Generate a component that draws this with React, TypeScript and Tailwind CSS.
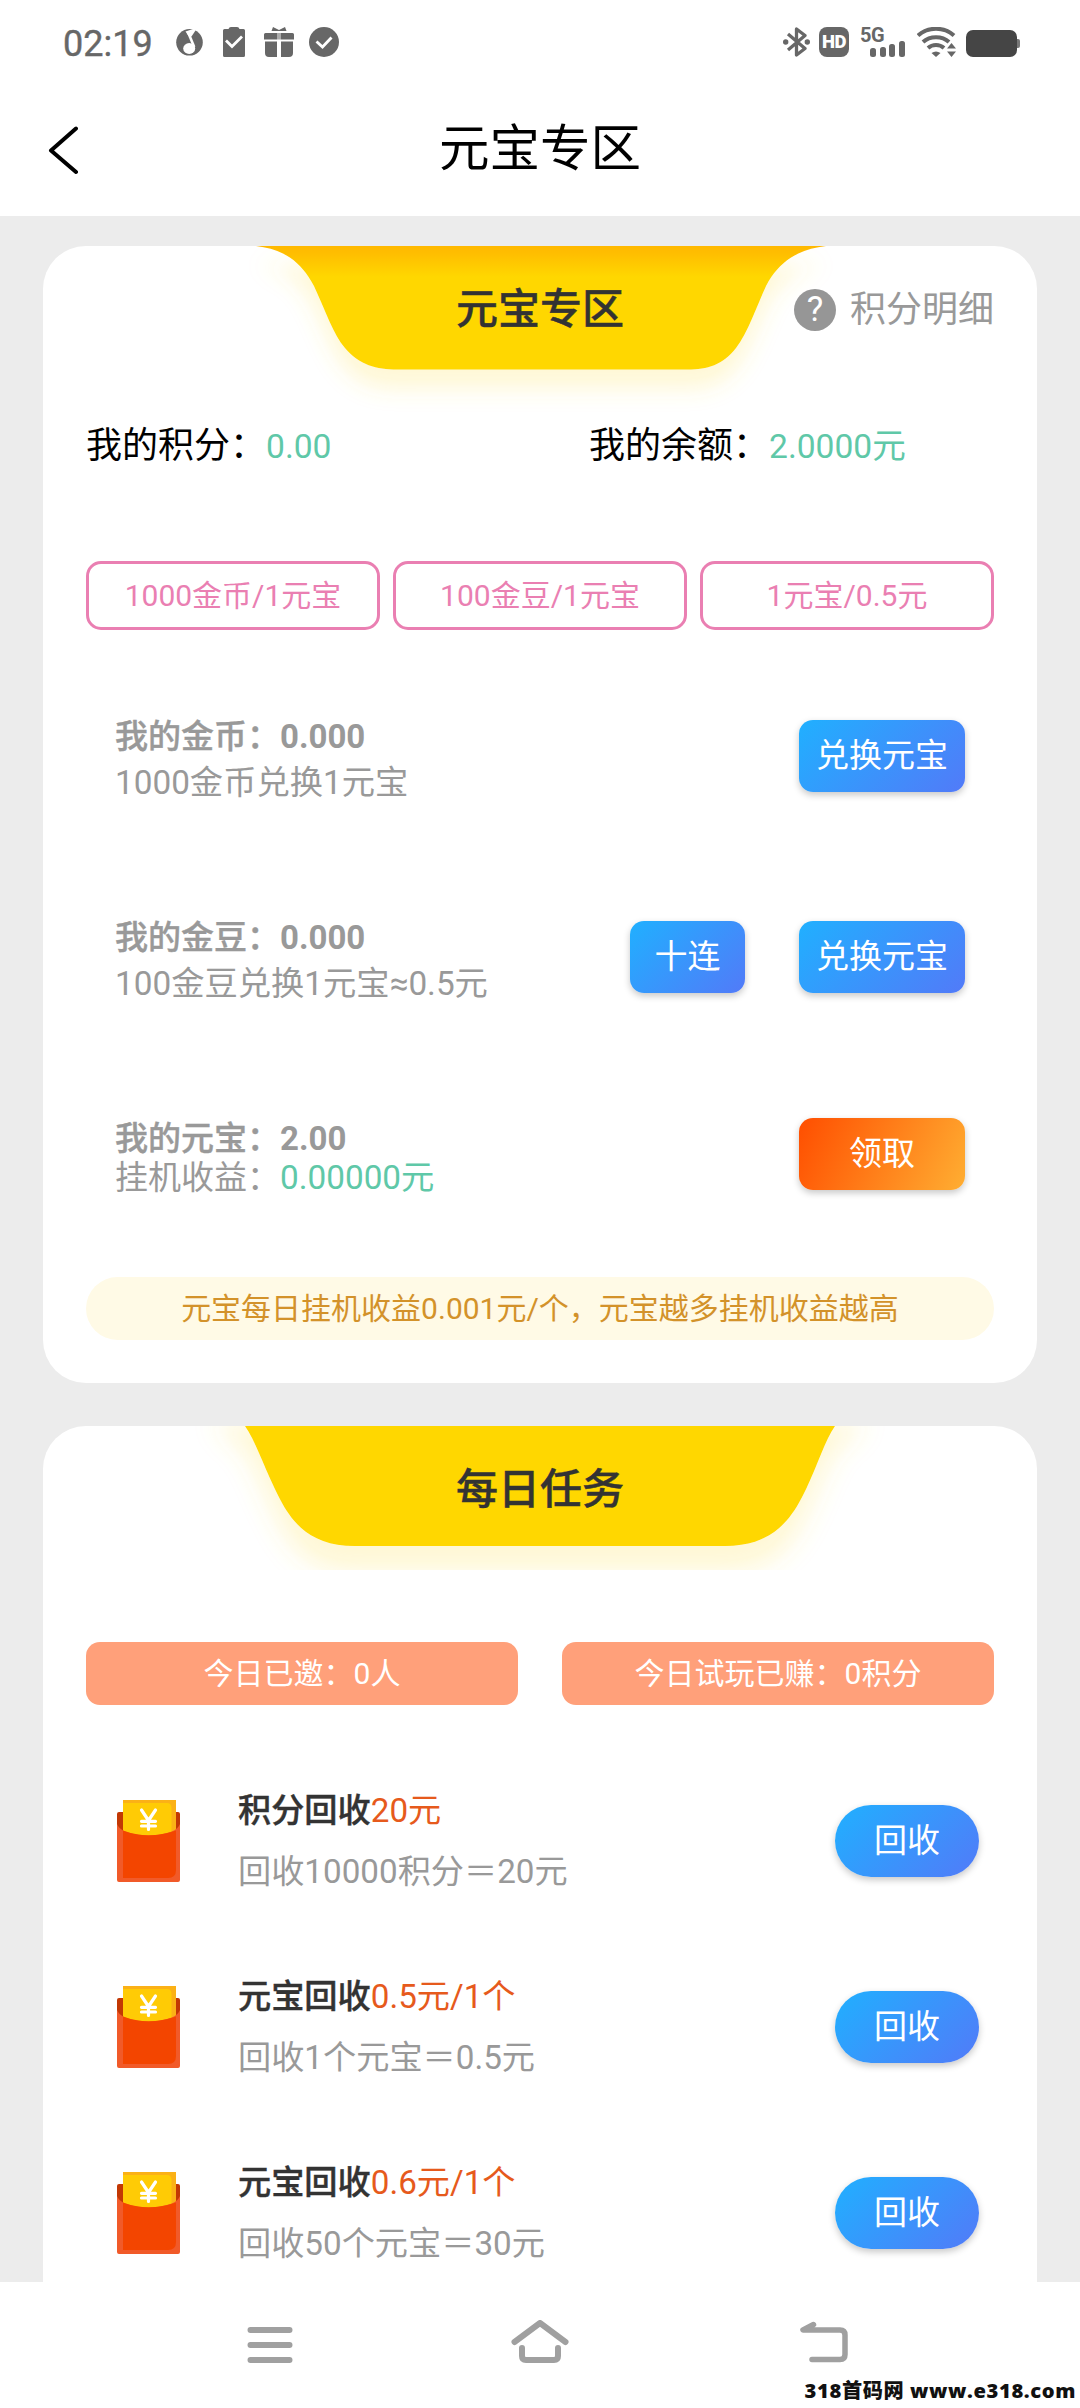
import React from 'react';

const exchangeRates = ['1000金币/1元宝', '100金豆/1元宝', '1元宝/0.5元'];

const tasks = [
  { title: '积分回收', reward: '20元', desc: '回收10000积分＝20元' },
  { title: '元宝回收', reward: '0.5元/1个', desc: '回收1个元宝＝0.5元' },
  { title: '元宝回收', reward: '0.6元/1个', desc: '回收50个元宝＝30元' },
];

function StatusBar() {
  return (
    <div className="flex h-[84px] items-center justify-between pl-[63px] pr-[60px] text-[#676767]">
      <div className="flex items-center">
        <span className="w-[113px] pt-[3px] text-[36px] leading-[84px] [-webkit-text-stroke:0.4px]">02:19</span>
        <svg width="27" height="30" viewBox="0 0 27 30" className="mr-[20px]">
          <circle cx="13.5" cy="15.3" r="13.3" fill="currentColor" />
          <path
            d="M12 5L18.2 20"
            fill="none"
            stroke="#fff"
            strokeWidth="2.6"
          />
          <path d="M9.5 4.5L21.5 0.5L15.5 9.5L12.5 9Z" fill="#fff" />
          <ellipse cx="13.2" cy="21.5" rx="6" ry="5.4" fill="#fff" />
        </svg>
        <svg width="22" height="30" viewBox="0 0 22 30" className="mr-[19px]">
          <path
            d="M1.5 2H5.5Q6 0 8 0H14Q16 0 16.5 2H20.5Q22 2 22 3.5V28.5Q22 30 20.5 30H1.5Q0 30 0 28.5V3.5Q0 2 1.5 2Z"
            fill="currentColor"
          />
          <path d="M3 13.5L9 19.5L19 9.5" fill="none" stroke="#fff" strokeWidth="2.8" />
        </svg>
        <svg width="30" height="30" viewBox="0 0 30 30" className="mr-[15px]" fill="currentColor">
          <path d="M9 0L15 3L21 0L22.5 4H7.5Z" />
          <path d="M1.5 6H13V12.500H0V7.5Q0 6 1.5 6ZM17 6H28.5Q30 6 30 7.5V12.500H17Z" />
          <path d="M13 6H17V12.500H13Z" opacity="0.55" />
          <path d="M1 14.5H13V30H5Q1 30 1 26ZM17 14.5H29V26Q29 30 25 30H17Z" />
        </svg>
        <svg width="30" height="30" viewBox="0 0 30 30">
          <circle cx="15" cy="15" r="15" fill="currentColor" />
          <path d="M7.5 14.5L13.5 20L22.5 10.5" fill="none" stroke="#fff" strokeWidth="2.8" />
        </svg>
      </div>
      <div className="flex items-center">
        <svg width="27" height="30" viewBox="0 0 27 30" className="mr-[9px]">
          <path
            d="M5 7L22 21.5L13.5 28V2L22 8.5L5 23"
            fill="none"
            stroke="currentColor"
            strokeWidth="3.3"
            strokeLinejoin="round"
          />
          <circle cx="2.7" cy="15" r="2.7" fill="currentColor" />
          <circle cx="24.3" cy="15" r="2.7" fill="currentColor" />
        </svg>
        <div className="mr-[9px] flex h-[30px] w-[30px] items-center justify-center rounded-[8px] bg-[#676767] text-[18.5px] font-black leading-none tracking-[-0.5px] text-white">
          HD
        </div>
        <div className="mr-[11px] flex h-[30px] w-[48px] flex-col">
          <span className="h-[14px] pl-[2px] text-[20px] font-bold leading-[16px] tracking-[-0.5px]">5G</span>
          <div className="flex h-[16px] items-end gap-[3.5px] pl-[12px]">
            <i className="h-[9px] w-[6px] rounded-[2.5px] bg-[#676767]" />
            <i className="h-[10.5px] w-[6px] rounded-[2.5px] bg-[#676767]" />
            <i className="h-[13px] w-[6px] rounded-[2.5px] bg-[#676767]" />
            <i className="h-[16px] w-[6px] rounded-[2.5px] bg-[#676767]" />
          </div>
        </div>
        <svg width="39" height="30" viewBox="0 0 39 30" className="mr-[10px]">
          <g fill="none" stroke="currentColor" strokeWidth="4">
            <path d="M1 8.5C11 -0.5 27 -0.5 37 8.5" />
            <path d="M6 15C13 8.5 25 8.5 32 15" />
            <path d="M11 21C15.5 17 22.5 17 27 21" />
          </g>
          <path d="M14.5 26Q19 23 23.5 26L19 30Z" fill="currentColor" />
          <path d="M30 21.5L34.5 16L39 21.5ZM30 24.5H39L34.5 30Z" fill="currentColor" />
        </svg>
        <div className="mt-[3px] h-[27px] w-[51px] rounded-[7px] bg-[#454545]" />
        <div className="mt-[3px] h-[9px] w-[3px] rounded-r-[2px] bg-[#777]" />
      </div>
    </div>
  );
}

function TitleBar() {
  return (
    <div className="flex h-[132px] items-start justify-between pl-[46px] pr-[46px]">
      <svg width="32" height="54" viewBox="0 0 32 54" className="mt-[40px]">
        <path
          d="M30 4.5L5 26.5L30 48"
          fill="none"
          stroke="#000"
          strokeWidth="4"
          strokeLinecap="round"
          strokeLinejoin="round"
        />
      </svg>
      <h1 className="mt-[30px] text-[50.5px] leading-[70px] text-black">元宝专区</h1>
      <span className="w-[32px]" />
    </div>
  );
}

function GradientButton({
  className,
  children,
}: {
  className: string;
  children: React.ReactNode;
}) {
  return (
    <button
      className={`h-[72px] pb-[1px] text-[33px] leading-[70px] text-white shadow-[0_3px_7px_rgba(0,0,0,0.22)] ${className}`}
    >
      {children}
    </button>
  );
}

const blue = 'bg-[linear-gradient(135deg,#20b0ff,#527af8)]';

function RedEnvelope() {
  return (
    <svg width="63" height="82" viewBox="0 0 63 82">
      <path d="M2 12H61Q63 12 63 14V40H0V14Q0 12 2 12Z" fill="#c23804" />
      <path d="M6 0H59V40H6Z" fill="#fbb116" />
      <path d="M6 3H50Q54.5 3 54.5 8V40H6Z" fill="#ffcb05" />
      <path d="M0 24Q2 29 8 31.5Q31 40 55 31.5Q61 29 63 24V80Q63 82 61 82H2Q0 82 0 80Z" fill="#f15a29" />
      <path d="M6 30.5Q31 40 59 30.5V70Q59 78 51 78H6Z" fill="#f34500" />
      <path
        d="M24.5 10L31.5 20.5L38.5 10M31.5 20V29.5M24.5 21.3H38.5M24.5 26H38.5"
        fill="none"
        stroke="#fff"
        strokeWidth="3.2"
        strokeLinecap="round"
      />
    </svg>
  );
}

function PointsCard() {
  return (
    <section className="h-[1137px] shrink-0 overflow-hidden rounded-[43px] bg-white">
      <div className="relative h-[176px] px-[43px]">
        <svg width="994" height="176" viewBox="0 0 994 176" className="absolute left-0 top-0">
          <defs>
            <linearGradient id="tabFill" x1="0" y1="0" x2="0" y2="1">
              <stop offset="0" stopColor="#ffb800" />
              <stop offset="0.07" stopColor="#ffbf00" />
              <stop offset="0.25" stopColor="#ffd700" />
              <stop offset="1" stopColor="#ffd700" />
            </linearGradient>
            <filter id="tabGlow" x="-20%" y="-20%" width="140%" height="170%">
              <feDropShadow dx="0" dy="19" stdDeviation="11" floodColor="#ffdf40" floodOpacity="0.22" />
            </filter>
          </defs>
          <path
            d="M213 0C240 3 258 15 271 40C284 68 290 88 302 102C316 119 334 123.500 354 123.500H645C664 123.500 680 119 693 102C705 86 713 62 723 40C736 15 756 3 783 0Z"
            fill="url(#tabFill)"
            filter="url(#tabGlow)"
          />
        </svg>
        <div className="relative flex h-[127px] items-center justify-end">
          <h2 className="mr-[170px] text-[42px] font-medium leading-[60px] text-[#333] [-webkit-text-stroke:0.4px]">
            元宝专区
          </h2>
          <div className="mr-[14px] flex h-[42px] w-[42px] items-center justify-center rounded-full bg-[#969696] text-[35px] leading-none text-white">
            ?
          </div>
          <span className="text-[36px] leading-[50px] text-[#999]">积分明细</span>
        </div>
      </div>

      <div className="grid h-[50px] grid-cols-[503px_1fr] px-[43px] text-[36px] leading-[49px] text-black">
        <div>
          我的积分：<span className="text-[33.6px] text-[#5fc8a8]">0.00</span>
        </div>
        <div>
          我的余额：<span className="text-[33.6px] text-[#5fc8a8]">2.0000元</span>
        </div>
      </div>

      <div className="mt-[89px] grid grid-cols-3 gap-[13px] px-[43px]">
        {exchangeRates.map((rate) => (
          <div
            key={rate}
            className="h-[69px] rounded-[15px] border-3 border-[#ea7fb2] text-center text-[30px] leading-[63px] text-[#ea7fb2]"
          >
            {rate}
          </div>
        ))}
      </div>

      <div className="mt-[84px] flex h-[201px] items-start justify-between px-[72px] text-[33.3px] text-[#999]">
        <div>
          <p className="text-[33px] font-medium leading-[46px] [-webkit-text-stroke:0.4px]">
            我的金币：<b className="[-webkit-text-stroke:0]">0.000</b>
          </p>
          <p className="leading-[46px]">1000金币兑换1元宝</p>
        </div>
        <GradientButton className={`mt-[6px] w-[166px] rounded-[14px] ${blue}`}>兑换元宝</GradientButton>
      </div>

      <div className="flex h-[201px] items-start justify-between px-[72px] text-[33.3px] text-[#999]">
        <div>
          <p className="text-[33px] font-medium leading-[46px] [-webkit-text-stroke:0.4px]">
            我的金豆：<b className="[-webkit-text-stroke:0]">0.000</b>
          </p>
          <p className="leading-[46px]">100金豆兑换1元宝≈0.5元</p>
        </div>
        <div className="mt-[6px] flex gap-[54px]">
          <GradientButton className={`w-[115px] rounded-[14px] ${blue}`}>十连</GradientButton>
          <GradientButton className={`w-[166px] rounded-[14px] ${blue}`}>兑换元宝</GradientButton>
        </div>
      </div>

      <div className="flex h-[161px] items-start justify-between px-[72px] text-[33px] text-[#999]">
        <div>
          <p className="font-medium leading-[46px] [-webkit-text-stroke:0.4px]">
            我的元宝：<b className="[-webkit-text-stroke:0]">2.00</b>
          </p>
          <p className="-mt-[4px] leading-[39px]">
            挂机收益：<span className="text-[33.3px] text-[#5fc8a8]">0.00000元</span>
          </p>
        </div>
        <GradientButton className="mt-[2px] w-[166px] rounded-[14px] bg-[linear-gradient(115deg,#ff4e00,#ffae32)]">
          领取
        </GradientButton>
      </div>

      <div className="mx-[43px] h-[63px] rounded-full bg-[#fffae6] text-center text-[30px] leading-[63px] text-[#d3922a]">
        元宝每日挂机收益0.001元/个，元宝越多挂机收益越高
      </div>
    </section>
  );
}

function DailyTasksCard() {
  return (
    <section className="h-[900px] shrink-0 overflow-hidden rounded-t-[43px] bg-white">
      <div className="relative h-[216px]">
        <svg width="994" height="144" viewBox="0 0 994 144" className="absolute left-0 top-0">
          <filter id="taskGlow" x="-20%" y="-20%" width="140%" height="170%">
            <feDropShadow dx="0" dy="26" stdDeviation="13" floodColor="#ffdf40" floodOpacity="0.22" />
          </filter>
          <path
            d="M170 -30L202 0C212 14 220 38 231 61C245 91 262 120 312 120H682C732 120 750 91 764 61C775 38 782 14 792 0L824 -30Z"
            fill="#ffd700"
            filter="url(#taskGlow)"
          />
        </svg>
        <h2 className="relative text-center text-[42px] font-medium leading-[128px] text-[#333] [-webkit-text-stroke:0.4px]">
          每日任务
        </h2>
      </div>

      <div className="grid grid-cols-2 gap-[44px] px-[43px] text-center text-[30px] leading-[63px] text-white">
        <div className="h-[63px] rounded-[14px] bg-[#ffa07a]">今日已邀：0人</div>
        <div className="h-[63px] rounded-[14px] bg-[#ffa07a]">今日试玩已赚：0积分</div>
      </div>

      <ul className="mt-[77px] pl-[74px] pr-[58px]">
        {tasks.map((task) => (
          <li key={task.desc} className="flex h-[186px] items-start">
            <div className="mt-[18px] w-[121px]">
              <RedEnvelope />
            </div>
            <div className="-mt-[2px] grow text-[33.2px] leading-[61px]">
              <p className="font-medium text-[#333] [-webkit-text-stroke:0.4px]">
                {task.title}
                <span className="font-normal text-[#e65a1c] [-webkit-text-stroke:0]">{task.reward}</span>
              </p>
              <p className="text-[#999]">{task.desc}</p>
            </div>
            <GradientButton className={`mt-[23px] w-[144px] rounded-full ${blue}`}>回收</GradientButton>
          </li>
        ))}
      </ul>
    </section>
  );
}

function NavBar() {
  return (
    <nav className="relative h-[126px] shrink-0 bg-white">
      <div className="flex h-[126px] items-start pl-[247px] pt-[38px] text-[#a0a0a0]">
        <svg width="46" height="46" viewBox="0 0 46 46">
          <path
            d="M3.5 10H42.5M3.5 25H42.5M3.5 40H42.5"
            stroke="currentColor"
            strokeWidth="6"
            strokeLinecap="round"
          />
        </svg>
        <svg width="58" height="46" viewBox="0 0 58 46" className="ml-[218px]">
          <path
            d="M3.5 22L29 3L54.5 22M11 28V36Q11 40 15 40H43Q47 40 47 36V28"
            fill="none"
            stroke="currentColor"
            strokeWidth="6"
            strokeLinecap="round"
            strokeLinejoin="round"
          />
        </svg>
        <svg width="50" height="46" viewBox="0 0 50 46" className="ml-[230px]">
          <path
            d="M14.5 4.5L4 10H41Q46 10 46 15V34.5Q46 39.5 41 39.5H13"
            fill="none"
            stroke="currentColor"
            strokeWidth="5.5"
            strokeLinecap="round"
            strokeLinejoin="round"
          />
        </svg>
      </div>
      <span className="absolute bottom-[3px] right-[4px] whitespace-nowrap font-['Open_Sans','Noto_Sans_CJK_SC',sans-serif] text-[20.2px] font-extrabold leading-[30px] tracking-[0.6px] text-[#111]">
        318首码网 www.e318.com
      </span>
    </nav>
  );
}

function App() {
  return (
    <div className="flex h-[2408px] w-[1080px] flex-col overflow-hidden bg-[#ececec] font-[Roboto,'Noto_Sans_CJK_SC',sans-serif]">
      <header className="h-[216px] shrink-0 bg-white">
        <StatusBar />
        <TitleBar />
      </header>
      <main className="flex h-[2066px] shrink-0 flex-col gap-[43px] overflow-hidden px-[43px] pt-[30px]">
        <PointsCard />
        <DailyTasksCard />
      </main>
      <NavBar />
    </div>
  );
}

export default App;
